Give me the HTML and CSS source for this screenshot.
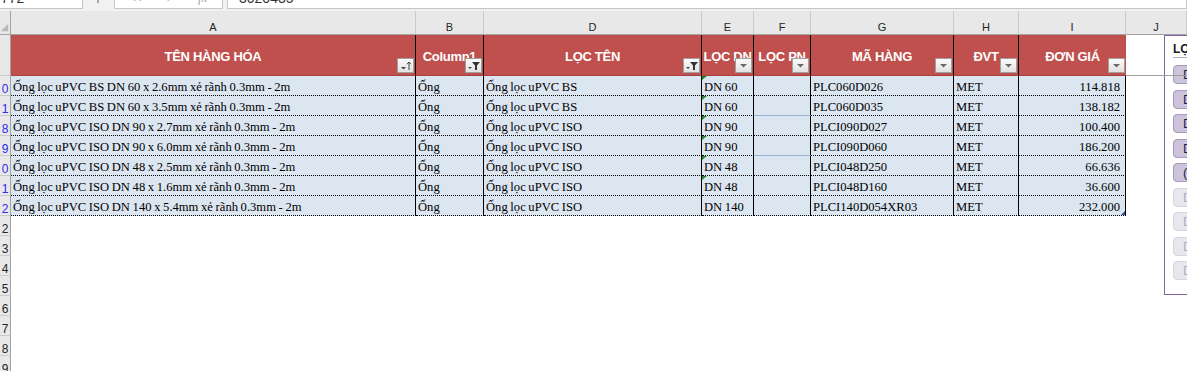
FILE: index.html
```html
<!DOCTYPE html>
<html lang="vi">
<head>
<meta charset="utf-8">
<title>Sheet</title>
<link rel="stylesheet" href="styles.css">
</head>
<body>
<div class="toolbar">
  <div class="box namebox"><span class="cut">772</span></div>
  <div class="sep"><span class="sepmark"></span></div>
  <div class="box fxbox"><span class="cut ic">✕</span><span class="cut ic">✓</span><span class="cut ic fx">fx</span></div>
  <div class="box formula"><span class="cut">3020435</span></div>
</div>

<div class="sheet">
  <div class="row colhead">
    <div class="ch corner"><svg width="11" height="23" viewBox="0 0 11 23"><polygon points="1,21 9,13 9,21" fill="#b8b8b8"/></svg></div>
    <div class="ch">A</div><div class="ch">B</div><div class="ch">D</div><div class="ch">E</div><div class="ch">F</div><div class="ch">G</div><div class="ch">H</div><div class="ch">I</div><div class="ch">J</div>
  </div>

  <div class="row thead">
    <div class="rh"></div>
    <div class="th">TÊN HÀNG HÓA<span class="fbtn"><svg width="15" height="13" viewBox="0 0 15 13"><polygon points="3,8 8,8 5.5,10.5" fill="#444"/><path d="M11 11V3M9 5.2L11 3l2 2.2" stroke="#444" stroke-width="1" fill="none"/></svg></span></div>
    <div class="th">Column1<span class="fbtn"><svg width="15" height="13" viewBox="0 0 15 13"><polygon points="2,8 6,8 4,10" fill="#444"/><polygon points="6,3 14,3 11,6.5 11,11 9,11 9,6.5" fill="#333"/></svg></span></div>
    <div class="th">LỌC TÊN<span class="fbtn"><svg width="15" height="13" viewBox="0 0 15 13"><polygon points="2,8 6,8 4,10" fill="#444"/><polygon points="6,3 14,3 11,6.5 11,11 9,11 9,6.5" fill="#333"/></svg></span></div>
    <div class="th">LỌC DN<span class="fbtn"><svg width="15" height="13" viewBox="0 0 15 13"><polygon points="4,5 11,5 7.5,8.5" fill="#6a6a6a"/></svg></span></div>
    <div class="th">LỌC PN<span class="fbtn"><svg width="15" height="13" viewBox="0 0 15 13"><polygon points="4,5 11,5 7.5,8.5" fill="#6a6a6a"/></svg></span></div>
    <div class="th">MÃ HÀNG<span class="fbtn"><svg width="15" height="13" viewBox="0 0 15 13"><polygon points="4,5 11,5 7.5,8.5" fill="#6a6a6a"/></svg></span></div>
    <div class="th">ĐVT<span class="fbtn"><svg width="15" height="13" viewBox="0 0 15 13"><polygon points="4,5 11,5 7.5,8.5" fill="#6a6a6a"/></svg></span></div>
    <div class="th last">ĐƠN GIÁ<span class="fbtn"><svg width="15" height="13" viewBox="0 0 15 13"><polygon points="4,5 11,5 7.5,8.5" fill="#6a6a6a"/></svg></span></div>
    <div class="blank"></div>
  </div>

  <div class="row data">
    <div class="rh sel">0</div>
    <div class="td">Ống lọc uPVC BS DN 60 x 2.6mm xẻ rãnh 0.3mm - 2m</div>
    <div class="td">Ống</div>
    <div class="td">Ống lọc uPVC BS</div>
    <div class="td err">DN 60</div>
    <div class="td"></div>
    <div class="td">PLC060D026</div>
    <div class="td">MET</div>
    <div class="td num">114.818</div>
    <div class="blank"></div>
  </div>
  <div class="row data">
    <div class="rh sel">1</div>
    <div class="td">Ống lọc uPVC BS DN 60 x 3.5mm xẻ rãnh 0.3mm - 2m</div>
    <div class="td">Ống</div>
    <div class="td">Ống lọc uPVC BS</div>
    <div class="td err">DN 60</div>
    <div class="td blue"></div>
    <div class="td">PLC060D035</div>
    <div class="td">MET</div>
    <div class="td num">138.182</div>
    <div class="blank"></div>
  </div>
  <div class="row data">
    <div class="rh sel">8</div>
    <div class="td">Ống lọc uPVC ISO DN 90 x 2.7mm xẻ rãnh 0.3mm - 2m</div>
    <div class="td">Ống</div>
    <div class="td">Ống lọc uPVC ISO</div>
    <div class="td err">DN 90</div>
    <div class="td"></div>
    <div class="td">PLCI090D027</div>
    <div class="td">MET</div>
    <div class="td num">100.400</div>
    <div class="blank"></div>
  </div>
  <div class="row data">
    <div class="rh sel">9</div>
    <div class="td">Ống lọc uPVC ISO DN 90 x 6.0mm xẻ rãnh 0.3mm - 2m</div>
    <div class="td">Ống</div>
    <div class="td">Ống lọc uPVC ISO</div>
    <div class="td err">DN 90</div>
    <div class="td blue"></div>
    <div class="td">PLCI090D060</div>
    <div class="td">MET</div>
    <div class="td num">186.200</div>
    <div class="blank"></div>
  </div>
  <div class="row data">
    <div class="rh sel">0</div>
    <div class="td">Ống lọc uPVC ISO DN 48 x 2.5mm xẻ rãnh 0.3mm - 2m</div>
    <div class="td">Ống</div>
    <div class="td">Ống lọc uPVC ISO</div>
    <div class="td err">DN 48</div>
    <div class="td"></div>
    <div class="td">PLCI048D250</div>
    <div class="td">MET</div>
    <div class="td num">66.636</div>
    <div class="blank"></div>
  </div>
  <div class="row data">
    <div class="rh sel">1</div>
    <div class="td">Ống lọc uPVC ISO DN 48 x 1.6mm xẻ rãnh 0.3mm - 2m</div>
    <div class="td">Ống</div>
    <div class="td">Ống lọc uPVC ISO</div>
    <div class="td err">DN 48</div>
    <div class="td"></div>
    <div class="td">PLCI048D160</div>
    <div class="td">MET</div>
    <div class="td num">36.600</div>
    <div class="blank"></div>
  </div>
  <div class="row data">
    <div class="rh sel">2</div>
    <div class="td">Ống lọc uPVC ISO DN 140 x 5.4mm xẻ rãnh 0.3mm - 2m</div>
    <div class="td">Ống</div>
    <div class="td">Ống lọc uPVC ISO</div>
    <div class="td">DN 140</div>
    <div class="td"></div>
    <div class="td">PLCI140D054XR03</div>
    <div class="td">MET</div>
    <div class="td num handle">232.000</div>
    <div class="blank"></div>
  </div>

  <div class="row empty"><div class="rh">2</div><div class="void"></div></div>
  <div class="row empty"><div class="rh">3</div><div class="void"></div></div>
  <div class="row empty"><div class="rh">4</div><div class="void"></div></div>
  <div class="row empty"><div class="rh">5</div><div class="void"></div></div>
  <div class="row empty"><div class="rh">6</div><div class="void"></div></div>
  <div class="row empty"><div class="rh">7</div><div class="void"></div></div>
  <div class="row empty"><div class="rh">8</div><div class="void"></div></div>
  <div class="row empty"><div class="rh">9</div><div class="void"></div></div>
</div>

<div class="slicer">
  <div class="stitle">LỌC DN</div>
  <div class="sbtns">
    <div class="sbtn">DN 140</div>
    <div class="sbtn">DN 48</div>
    <div class="sbtn">DN 60</div>
    <div class="sbtn">DN 90</div>
    <div class="sbtn">(blank)</div>
    <div class="sbtn off">DN 110</div>
    <div class="sbtn off">DN 168</div>
    <div class="sbtn off">DN 200</div>
    <div class="sbtn off">DN 250</div>
  </div>
</div>
<div class="freeze"></div>
</body>
</html>
```

FILE: styles.css
```css
* { box-sizing: border-box; }
html, body {
  margin: 0;
  padding: 0;
  width: 1187px;
  height: 371px;
  overflow: hidden;
  background: #ffffff;
}
body {
  position: relative;
  font-family: "Liberation Sans", Arial, sans-serif;
}

/* formula bar remnant */
.toolbar {
  height: 11px;
  display: flex;
  background: #f1f1f1;
  overflow: hidden;
}
.box {
  height: 9px;
  background: #ffffff;
  border: 1px solid #c6c6c6;
  border-top: none;
  overflow: hidden;
  display: flex;
  align-items: flex-start;
}
.namebox { width: 84px; margin-left: -1px; padding-left: 1px; }
.sep { width: 31px; display: flex; justify-content: center; }
.sepmark { display: block; width: 2px; height: 3px; background: #a8a8a8; margin-left: -1px; }
.fxbox { width: 109px; padding-left: 17px; }
.formula { flex: 1; margin-left: 4px; padding-left: 11px; }
.cut {
  display: block;
  font-size: 14px;
  line-height: 14px;
  margin-top: -9px;
  color: #333333;
}
.ic { color: #a6a6a6; margin-right: 22px; font-size: 13px; }
.fx { font-style: italic; font-family: "Liberation Serif", serif; margin-right: 0; }

/* grid */
.row {
  display: grid;
  grid-template-columns: 11px 405px 68px 218px 52px 57px 143px 65px 107px 61px;
}
.colhead { height: 24px; }
.ch {
  background: #e8e8e8;
  border-right: 1px solid #cbcbcb;
  border-bottom: 1px solid #a3a3a3;
  display: flex;
  align-items: flex-end;
  justify-content: center;
  font-size: 11px;
  line-height: 11px;
  padding-bottom: 1px;
  color: #262626;
}
.corner { border-right-color: #a3a3a3; align-items: stretch; padding-bottom: 0; }
.corner svg { display: block; }

.rh {
  background: #e8e8e8;
  border-right: 1px solid #a3a3a3;
  border-bottom: 1px solid #cbcbcb;
  display: flex;
  align-items: flex-end;
  justify-content: center;
  overflow: hidden;
  font-size: 12px;
  line-height: 12px;
  color: #262626;
}
.rh.sel { color: #2b2bf0; }

.thead { height: 41px; }
.th {
  position: relative;
  background: #c0504d;
  color: #ffffff;
  font-weight: bold;
  font-size: 13px;
  letter-spacing: -0.3px;
  text-align: center;
  line-height: 39px;
  padding-top: 2px;
  white-space: nowrap;
  overflow: hidden;
  border-right: 1px solid #000000;
  border-bottom: 1px solid #a8403d;
}
.th.last { border-right: none; }
.fbtn {
  position: absolute;
  right: 1px;
  bottom: 2px;
  width: 17px;
  height: 15px;
  background: linear-gradient(#fbfbfb, #e2e2e2);
  border: 1px solid #a0a0a0;
  display: flex;
  align-items: center;
  justify-content: center;
}
.fbtn svg { display: block; }

.data { height: 20px; }
.td {
  position: relative;
  height: 20px;
  background: #dce6f1;
  border-right: 1px solid #000000;
  border-bottom: 1px dotted #000000;
  font-family: "Liberation Serif", "Times New Roman", serif;
  font-size: 12.6px;
  word-spacing: -0.5px;
  line-height: 16px;
  padding: 3px 2px 0 2px;
  white-space: nowrap;
  overflow: hidden;
  color: #000000;
}
.td.num { text-align: right; padding-right: 5px; }
.td.blue { border-bottom: 1px solid #95b3d7; }
.td.err::before {
  content: "";
  position: absolute;
  left: 0;
  top: 0;
  border-top: 4px solid #1c8a2a;
  border-right: 5px solid transparent;
}
.td.handle::after {
  content: "";
  position: absolute;
  right: 0;
  bottom: 0;
  border-bottom: 4px solid #2f4aa8;
  border-left: 4px solid transparent;
}
.blank { background: #ffffff; }

.empty { height: 20px; }
.void { grid-column: 2 / -1; background: #ffffff; }

/* slicer overlay */
.slicer {
  position: absolute;
  left: 1164px;
  top: 35px;
  width: 80px;
  height: 260px;
  background: #ffffff;
  border: 1px solid #8064a2;
  padding: 6px 0 0 8px;
  overflow: hidden;
}
.stitle {
  font-weight: bold;
  font-size: 12px;
  line-height: 14px;
  height: 16px;
  color: #1b1b2b;
  border-bottom: 1px solid #b7a7cc;
  white-space: nowrap;
}
.sbtns {
  display: flex;
  flex-direction: column;
  gap: 5.5px;
  margin-top: 7px;
}
.sbtn {
  height: 19px;
  width: 60px;
  border: 1px solid #a59db4;
  border-radius: 4px;
  background: #cdc3dc;
  color: #1e1e3c;
  font-size: 13px;
  line-height: 17px;
  padding-left: 9px;
  white-space: nowrap;
}
.sbtn.off {
  background: #e8e6ee;
  border-color: #d6d3de;
  color: #b0b0b8;
}

.freeze {
  position: absolute;
  left: 1126px;
  top: 75px;
  width: 61px;
  height: 1px;
  background: #a0a0a0;
}
```
